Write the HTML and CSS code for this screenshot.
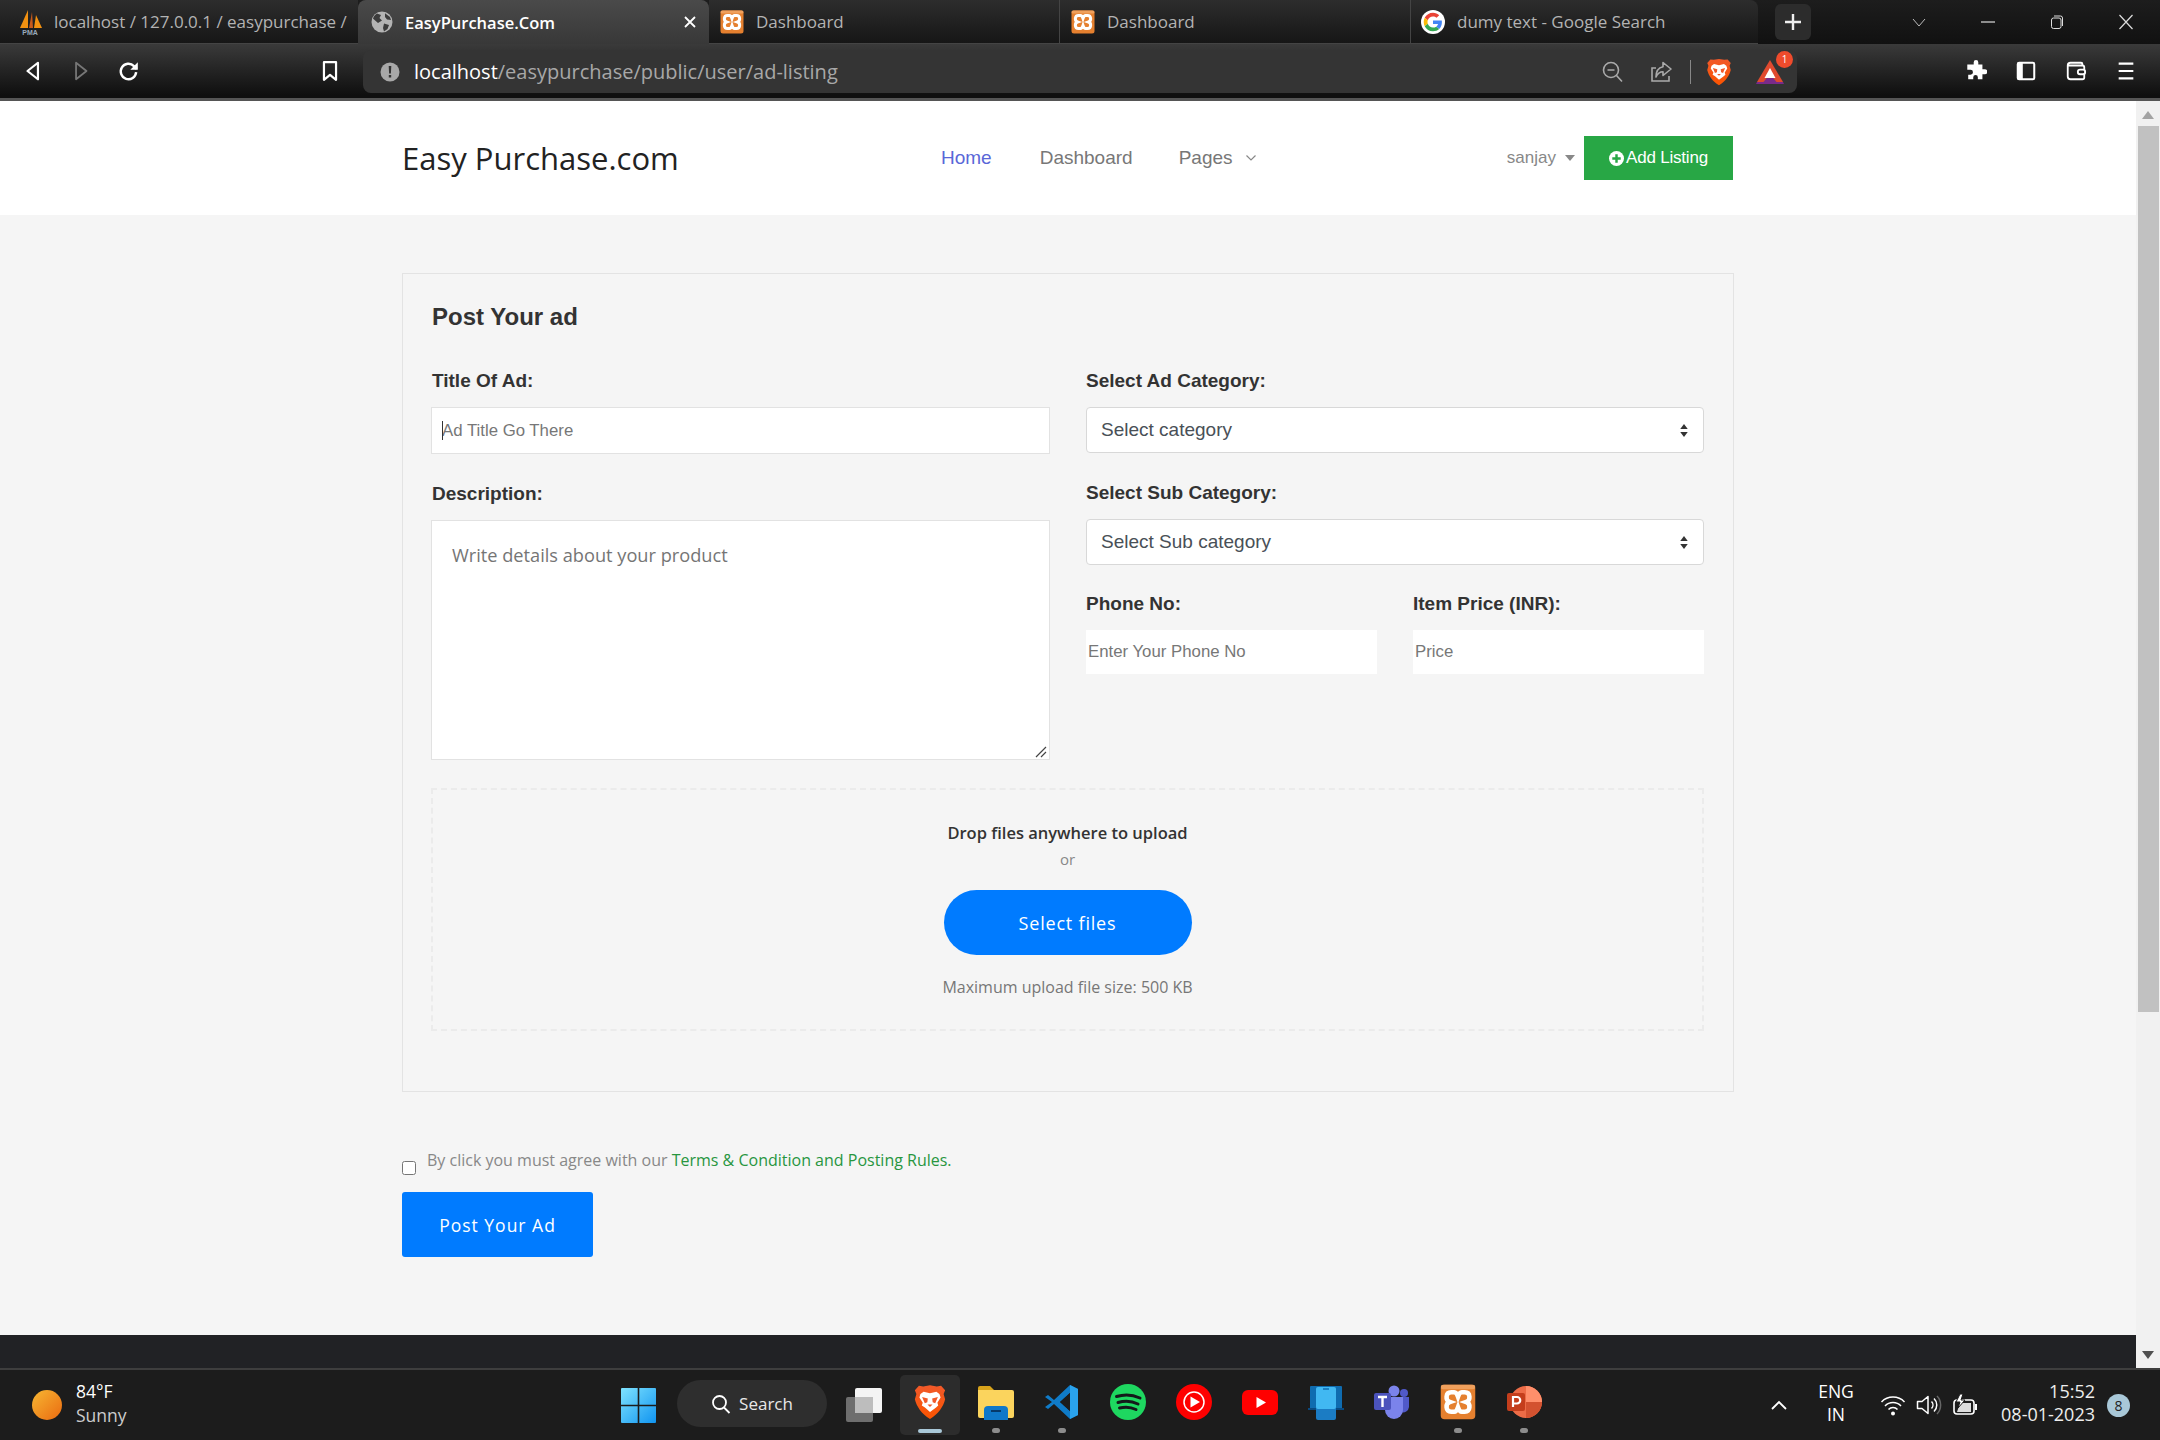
FILE: index.html
```html
<!DOCTYPE html>
<html lang="en">
<head>
<meta charset="utf-8">
<title>EasyPurchase.Com</title>
<link rel="stylesheet" href="styles.css">
</head>
<body>
<svg class="defs" width="0" height="0" aria-hidden="true">
  <defs>
    <linearGradient id="braveGrad" x1="0" y1="0" x2="0" y2="1"><stop offset="0" stop-color="#f1592a"/><stop offset="1" stop-color="#fb5400"/></linearGradient>
    <symbol id="brave" viewBox="0 0 24 24">
      <g transform="translate(12 0) scale(1.12 1) translate(-12 0)">
      <path fill="url(#braveGrad)" d="M12 .8 16 1.600l2.600-.4 2.400 3-.9 2.400.9 3.600C20 15 17 20 12 23.400 7 20 4 15 3 10.200l.9-3.600L3 4.200l2.400-3L8 1.600Z"/>
      <path fill="#fff" d="M8.200 5.200 12 6.200l3.800-1 1.800 1.500.7 2.300-1.900 3.500.5 1.900-1.300 1.300L12 18.600 9 15.700 7.100 14.400l.6-1.900L5.700 9l.6-2.300Z"/>
      <path fill="#f1592a" d="M7.300 8.600 10.700 9.600 10.400 12.200 8.900 12.800ZM16.700 8.600 13.300 9.600 13.600 12.200 15.100 12.800ZM10.500 13.700 13.500 13.700 12 15.300Z"/>
      </g>
    </symbol>
    <symbol id="xampp" viewBox="0 0 24 24">
      <rect x="0.500" y="0.500" width="23" height="23" rx="2.500" fill="#e5802f"/>
      <rect x="0.500" y="0.500" width="23" height="3" rx="1.500" fill="#f0a05c"/>
      <path fill="none" stroke="#fff" stroke-width="3" d="M9.500 5.500H7.500C3.500 5.500 3.500 11 6.500 12 3.500 13 3.500 18.500 7.500 18.500H9.500C11 18.500 11.500 17 12 15.500 12.500 17 13 18.500 14.500 18.500H16.500C20.500 18.500 20.500 13 17.500 12 20.500 11 20.500 5.500 16.500 5.500H14.500C13 5.500 12.500 7 12 8.500 11.500 7 11 5.500 9.500 5.500Z"/>
    </symbol>
  </defs>
</svg>

<div class="tabstrip">
  <div class="tab tab-first">
    <svg class="tabicon tabicon-pma" viewBox="0 0 26 26"><path fill="#f29111" d="M3 19 11 1v18Z"/><path fill="#c8591b" d="M12 19 15 3l1 16Z"/><path fill="#f29111" d="M17 19 19 6l6 13Z"/><text class="pma" x="13" y="25.500">PMA</text></svg>
    <span class="tablabel">localhost / 127.0.0.1 / easypurchase /</span>
  </div>
  <div class="tab tab-active">
    <svg class="tabicon" viewBox="0 0 24 24"><circle cx="12" cy="12" r="10.500" fill="#b4b4b4"/><path fill="#3c3c3c" d="M7 3.500 11 5 9.500 8 12 10.500 8 13 4 9.500 3 8.500C4 6 5 4.800 7 3.500ZM14 13.500l5 1.500-1.500 4-3.500 2.500-1-3.500ZM15 3.300 20 7l1 3-4-.5-2-2.500Z"/></svg>
    <span class="tablabel tablabel-active">EasyPurchase.Com</span>
    <svg class="tabclose" viewBox="0 0 14 14"><path d="M2 2 12 12M12 2 2 12" stroke="#fff" stroke-width="1.800" fill="none"/></svg>
  </div>
  <div class="tab tab-divided"><svg class="tabicon tabicon-sq"><use href="#xampp"/></svg><span class="tablabel">Dashboard</span></div>
  <div class="tab tab-divided"><svg class="tabicon tabicon-sq"><use href="#xampp"/></svg><span class="tablabel">Dashboard</span></div>
  <div class="tab tab-google">
    <svg class="tabicon" viewBox="-7 -7 62 62"><circle cx="24" cy="24" r="31" fill="#fff"/><path fill="#EA4335" d="M24 9.500c3.540 0 6.710 1.220 9.210 3.600l6.850-6.850C35.900 2.380 30.470 0 24 0 14.620 0 6.510 5.380 2.560 13.220l7.980 6.190C12.430 13.720 17.740 9.500 24 9.500z"/><path fill="#4285F4" d="M46.980 24.550c0-1.570-.15-3.090-.38-4.550H24v9.020h12.940c-.58 2.960-2.260 5.480-4.780 7.180l7.730 6c4.510-4.180 7.090-10.360 7.090-17.650z"/><path fill="#FBBC05" d="M10.530 28.590c-.48-1.450-.76-2.990-.76-4.590s.27-3.140.76-4.590l-7.980-6.190C.92 16.460 0 20.120 0 24c0 3.880.92 7.540 2.560 10.780l7.970-6.190z"/><path fill="#34A853" d="M24 48c6.480 0 11.930-2.130 15.890-5.810l-7.730-6c-2.150 1.450-4.920 2.300-8.160 2.300-6.260 0-11.570-4.220-13.470-9.910l-7.980 6.190C6.510 42.620 14.620 48 24 48z"/></svg>
    <span class="tablabel">dumy text - Google Search</span>
  </div>
  <div class="newtab"><svg viewBox="0 0 20 20" class="plus"><path d="M10 2v16M2 10h16" stroke="#eee" stroke-width="2.400"/></svg></div>
  <div class="winctl">
    <svg class="winbtn" viewBox="0 0 16 16"><path d="M2 5l6 7 6-7" stroke="#bbb" fill="none"/></svg>
    <svg class="winbtn" viewBox="0 0 16 16"><path d="M1 8h14" stroke="#ddd" stroke-width="1.200"/></svg>
    <svg class="winbtn" viewBox="0 0 16 16"><rect x="2.500" y="4" width="9.500" height="10.500" rx="2" stroke="#ddd" fill="none"/><path d="M5 2h6.500a2 2 0 0 1 2 2v8" stroke="#ddd" fill="none"/></svg>
    <svg class="winbtn" viewBox="0 0 16 16"><path d="M1.500 1 14.500 15M14.500 1 1.500 15" stroke="#ddd" stroke-width="1.200"/></svg>
  </div>
</div>

<div class="toolbar">
  <div class="navbtns">
    <svg class="navicon" viewBox="0 0 20 20"><path d="M14.500 2.500 5 10l9.500 7.500Z" fill="none" stroke="#fff" stroke-width="2" stroke-linejoin="round"/></svg>
    <svg class="navicon" viewBox="0 0 20 20"><path d="M5.500 2.500 15 10l-9.500 7.500Z" fill="none" stroke="#777" stroke-width="1.600" stroke-linejoin="round"/></svg>
    <svg class="navicon" viewBox="0 0 20 20"><path d="M16.500 11a7 7 0 1 1-2-5.500L17 8" fill="none" stroke="#fff" stroke-width="2.200"/><path d="M18 2v6.800h-6.800Z" fill="#fff"/></svg>
    <svg class="navicon navicon-book" viewBox="0 0 20 20"><path d="M4.500 2h11v16L10 13.500 4.500 18Z" fill="none" stroke="#fff" stroke-width="2" stroke-linejoin="round"/></svg>
  </div>
  <div class="addressbar">
    <svg class="infoicon" viewBox="0 0 20 20"><circle cx="10" cy="10" r="9.500" fill="#a8a8a8"/><path d="M8.700 4h2.600l-.4 7.500H9.100ZM8.800 13h2.400v2.400H8.800Z" fill="#333"/></svg>
    <span class="url"><span class="url-host">localhost</span>/easypurchase/public/user/ad-listing</span>
    <div class="addr-actions">
      <svg class="acticon" viewBox="0 0 24 24"><circle cx="10" cy="10" r="7.500" fill="none" stroke="#aaa" stroke-width="1.600"/><path d="M6.500 10h7M15.500 15.500 21 21.500" stroke="#aaa" stroke-width="1.600"/></svg>
      <svg class="acticon acticon-share" viewBox="0 0 24 24"><path d="M7 8H3v13h17v-5" fill="none" stroke="#aaa" stroke-width="1.600"/><path d="M14 2.500 22 9l-8 6.500v-3.700C10.500 11.800 8.500 13.500 7 17c0-6 3-9.500 7-10.300Z" fill="none" stroke="#aaa" stroke-width="1.600" stroke-linejoin="round"/></svg>
      <span class="addr-sep"></span>
      <svg class="braveicon"><use href="#brave"/></svg>
      <span class="bat">
        <svg class="baticon" viewBox="0 0 30 30"><path d="M15 3 28 25H2Z" fill="#e04a2f"/><path d="M2 25 8.500 25 15 17 21.500 25H28L29 27H1Z" fill="#7a2a8a"/><path d="M15 11 20.500 21H9.500Z" fill="#fff"/></svg>
        <span class="batbadge">1</span>
      </span>
    </div>
  </div>
  <div class="extensions">
    <svg class="exticon" viewBox="0 0 24 24"><path fill="#fff" d="M9.500 2.500a2.500 2.500 0 0 1 5 0V5H19v5h2.500a2.800 2.800 0 0 1 0 5.600H19V21h-5v-2.200a2.500 2.500 0 0 0-5 0V21H3.500v-5H6a2.700 2.700 0 0 0 0-5.400H2.500V5h7Z"/></svg>
    <svg class="exticon" viewBox="0 0 24 24"><rect x="3" y="3" width="18" height="18" rx="1.500" fill="none" stroke="#fff" stroke-width="2.200"/><rect x="3" y="3" width="5.500" height="18" fill="#fff"/></svg>
    <svg class="exticon" viewBox="0 0 24 24"><path d="M19 6V4.500A1.500 1.500 0 0 0 17.500 3H6a3 3 0 0 0-3 3v12a3 3 0 0 0 3 3h13a2 2 0 0 0 2-2V8a2 2 0 0 0-2-2H3.500" fill="none" stroke="#fff" stroke-width="2"/><rect x="14" y="10.500" width="8" height="5" rx="2.500" fill="#222" stroke="#fff" stroke-width="2"/></svg>
    <svg class="exticon" viewBox="0 0 24 24"><path d="M4 4h16M4 12h16M4 20h16" stroke="#fff" stroke-width="2.400"/></svg>
  </div>
</div>

<div class="viewport">
  <div class="page">
    <header class="site-header">
      <div class="container header-inner">
        <a class="logo">Easy Purchase.com</a>
        <nav class="mainnav">
          <a class="navlink navlink-active">Home</a>
          <a class="navlink">Dashboard</a>
          <a class="navlink navlink-pages">Pages <svg class="chev" viewBox="0 0 12 8"><path d="M1.500 1.500 6 6l4.500-4.500" fill="none" stroke="#888" stroke-width="1.200"/></svg></a>
        </nav>
        <div class="useractions">
          <span class="username">sanjay <span class="caret"></span></span>
          <a class="addbtn"><svg class="plusicon" viewBox="0 0 16 16"><circle cx="8" cy="8" r="8" fill="#fff"/><path d="M8 3.500v9M3.500 8h9" stroke="#28a745" stroke-width="2.600"/></svg>Add Listing</a>
        </div>
      </div>
    </header>

    <main class="main">
      <div class="container">
        <section class="card">
          <h2 class="card-title">Post Your ad</h2>
          <div class="formgrid">
            <div class="col">
              <label class="label">Title Of Ad:</label>
              <div class="inputwrap">
                <span class="textcaret"></span>
                <input class="input" type="text" placeholder="Ad Title Go There">
              </div>
              <label class="label label-desc">Description:</label>
              <div class="textareawrap">
                <textarea class="textarea" placeholder="Write details about your product"></textarea>
                <svg class="grip" viewBox="0 0 12 12"><path d="M1 11 11 1M6 11 11 6" stroke="#444" stroke-width="1.200"/></svg>
              </div>
            </div>
            <div class="col">
              <label class="label">Select Ad Category:</label>
              <div class="selectbox"><span>Select category</span><svg class="updown" viewBox="0 0 10 16"><path d="M5 1 9 6.500H1ZM5 15 1 9.500h8Z" fill="#333"/></svg></div>
              <label class="label label-sub">Select Sub Category:</label>
              <div class="selectbox"><span>Select Sub category</span><svg class="updown" viewBox="0 0 10 16"><path d="M5 1 9 6.500H1ZM5 15 1 9.500h8Z" fill="#333"/></svg></div>
              <div class="pair">
                <div>
                  <label class="label">Phone No:</label>
                  <input class="input input-plain" type="text" placeholder="Enter Your Phone No">
                </div>
                <div>
                  <label class="label">Item Price (INR):</label>
                  <input class="input input-plain" type="text" placeholder="Price">
                </div>
              </div>
            </div>
          </div>
          <div class="dropzone">
            <p class="drop-title">Drop files anywhere to upload</p>
            <p class="drop-or">or</p>
            <a class="selectfiles">Select files</a>
            <p class="drop-max">Maximum upload file size: 500 KB</p>
          </div>
        </section>
        <div class="terms">
          <input class="check" type="checkbox">
          <span class="terms-text">By click you must agree with our <a class="terms-link">Terms &amp; Condition and Posting Rules.</a></span>
        </div>
        <a class="postbtn">Post Your Ad</a>
      </div>
    </main>
    <footer class="site-footer"></footer>
  </div>
  <div class="scrollbar">
    <svg class="sb-arrow" viewBox="0 0 12 8"><path d="M6 0 12 8H0Z" fill="#a3a3a3"/></svg>
    <div class="sb-thumb"></div>
    <svg class="sb-arrow sb-arrow-down" viewBox="0 0 12 8"><path d="M6 8 0 0h12Z" fill="#505050"/></svg>
  </div>
</div>

<div class="taskbar">
  <div class="weather">
    <span class="sun"></span>
    <div class="weather-text"><span class="temp">84°F</span><span class="cond">Sunny</span></div>
  </div>
  <svg class="winlogo" viewBox="0 0 35 35"><defs><linearGradient id="winGrad" x1="0" y1="0" x2="1" y2="1"><stop offset="0" stop-color="#7fe3ff"/><stop offset="1" stop-color="#1094f0"/></linearGradient></defs><path fill="url(#winGrad)" d="M1 0h15.700v16.700H0V1a1 1 0 0 1 1-1ZM18.300 0H34a1 1 0 0 1 1 1v15.700H18.300ZM0 18.300h16.700V35H1a1 1 0 0 1-1-1ZM18.300 18.300H35V34a1 1 0 0 1-1 1H18.300Z"/></svg>
  <div class="searchpill">
    <svg class="searchicon" viewBox="0 0 20 20"><circle cx="8.500" cy="8.500" r="6.500" fill="none" stroke="#fff" stroke-width="1.800"/><path d="M13 13.500 18.500 19" stroke="#fff" stroke-width="1.800"/></svg>
    <span>Search</span>
  </div>
  <svg class="taskview" viewBox="0 0 36 34"><rect x="0" y="9" width="27" height="25" rx="2" fill="#6e6e6e"/><rect x="9" y="0" width="27" height="25" rx="2" fill="#f4f4f4"/><rect x="9" y="9" width="18" height="16" fill="#bdbdbd"/></svg>
  <div class="apps">
    <div class="app app-current"><svg class="appicon appicon-brave"><use href="#brave"/></svg><span class="runbar"></span></div>
    <div class="app"><svg class="appicon" viewBox="0 0 36 36"><path d="M0 4a2 2 0 0 1 2-2h10l4 4H0Z" fill="#d8a31b"/><path d="M0 6h34a2 2 0 0 1 2 2v24a2 2 0 0 1-2 2H2a2 2 0 0 1-2-2Z" fill="#fbd45d"/><path d="M6 36V26a4 4 0 0 1 4-4h16a4 4 0 0 1 4 4v10Z" fill="#0f78c9"/><path d="M13 27h10" stroke="#063a6b" stroke-width="2"/></svg><span class="rundot"></span></div>
    <div class="app"><svg class="appicon" viewBox="0 0 36 36"><path d="M26 1 34 5v26l-8 4L10 20l-6 5-3-2 7-5-7-5 3-2 6 5Z" fill="#0f7bc8"/><path d="M26 9v18l-10-9Z" fill="#1c1c1c"/><path d="M26 1 34 5v26l-8 4Z" fill="#2aa3ee"/><path d="M26 9v18l-10-9Z" fill="#1c1c1c"/></svg><span class="rundot"></span></div>
    <div class="app"><svg class="appicon" viewBox="0 0 36 36"><circle cx="18" cy="18" r="18" fill="#1ed760"/><path d="M6.500 12.500c8-2.500 16-2 23.500 1.500M8 18.500c7-2 14-1.500 20 1.500M9.500 24c6-1.500 11.500-1 16.500 1.500" fill="none" stroke="#14191a" stroke-width="3" stroke-linecap="round"/></svg></div>
    <div class="app"><svg class="appicon" viewBox="0 0 36 36"><circle cx="18" cy="18" r="18" fill="#f00"/><circle cx="18" cy="18" r="10" fill="none" stroke="#fff" stroke-width="1.500"/><path d="M14.500 12.500 24 18l-9.500 5.500Z" fill="#fff"/></svg></div>
    <div class="app"><svg class="appicon" viewBox="0 0 36 36"><rect x="0" y="6" width="36" height="25" rx="6" fill="#f00"/><path d="M14.500 13 24 18.500 14.500 24Z" fill="#fff"/></svg></div>
    <div class="app"><svg class="appicon" viewBox="0 0 36 36"><path d="M3 2h30a1 1 0 0 1 1 1v23H2V3a1 1 0 0 1 1-1Z" fill="#0f6cb0"/><path d="M0 24h36v2H0Z" fill="#0a4a80"/><rect x="8" y="3" width="20" height="33" rx="2" fill="#1b7cc4"/><rect x="8" y="3" width="20" height="22" rx="2" fill="#41b8f2"/><path d="M15 5h6" stroke="#0f6cb0" stroke-width="1.500"/></svg></div>
    <div class="app"><svg class="appicon" viewBox="0 0 36 36"><circle cx="20" cy="7" r="5.500" fill="#7b83eb"/><circle cx="30" cy="9" r="4" fill="#5059c9"/><path d="M24 13h11v10a6 6 0 0 1-8 5Z" fill="#5059c9"/><path d="M11 13h18v13a9 9 0 0 1-18 0Z" fill="#7b83eb"/><rect x="0" y="9" width="17" height="17" rx="2" fill="#4b53bc"/><path d="M4 13h9M8.500 13v10" stroke="#fff" stroke-width="2.400"/></svg></div>
    <div class="app"><svg class="appicon"><use href="#xampp"/></svg><span class="rundot"></span></div>
    <div class="app"><svg class="appicon" viewBox="0 0 36 36"><circle cx="20" cy="18" r="16" fill="#ed6c47"/><path d="M20 2a16 16 0 0 1 16 16H20Z" fill="#ff8f6b"/><path d="M20 18h16a16 16 0 0 1-16 16Z" fill="#d35230"/><rect x="1" y="9" width="18" height="18" rx="2" fill="#c43e1c"/><path d="M7 23V13h4a3 3 0 0 1 0 6.500H7" fill="none" stroke="#fff" stroke-width="2.200"/></svg><span class="rundot"></span></div>
  </div>
  <div class="tray">
    <svg class="trayup" viewBox="0 0 18 12"><path d="M2 10 9 3l7 7" fill="none" stroke="#fff" stroke-width="1.800"/></svg>
    <div class="lang"><span>ENG</span><span>IN</span></div>
    <svg class="trayicon" viewBox="0 0 26 22"><path d="M1.500 8a16 16 0 0 1 23 0M5 12a11 11 0 0 1 16 0M8.500 15.500a6 6 0 0 1 9 0" fill="none" stroke="#fff" stroke-width="1.500"/><circle cx="13" cy="19.500" r="2" fill="#fff"/></svg>
    <svg class="trayicon" viewBox="0 0 26 22"><path d="M1.500 7.500h4.500L12 2.500v17L6 14.500H1.500Z" fill="none" stroke="#fff" stroke-width="1.500" stroke-linejoin="round"/><path d="M15.500 7.500a5 5 0 0 1 0 7M18 4.500a9 9 0 0 1 0 13" fill="none" stroke="#fff" stroke-width="1.500"/><path d="M21 2a13 13 0 0 1 0 18" fill="none" stroke="#666" stroke-width="1.500"/></svg>
    <svg class="trayicon" viewBox="0 0 26 22"><rect x="2" y="6" width="20" height="14" rx="3" fill="none" stroke="#fff" stroke-width="1.600"/><path d="M24 10v6" stroke="#fff" stroke-width="2"/><path d="M5 18l3-9h11v9Z" fill="#ddd"/><path d="M8 0 4 8h4l-2 6 7-8H9l2-6Z" fill="#fff" stroke="#1c1c1c"/></svg>
    <div class="clock"><span>15:52</span><span>08-01-2023</span></div>
    <span class="notify">8</span>
  </div>
</div>
</body>
</html>
```

FILE: styles.css
```css
* { box-sizing: border-box; }
html, body { margin: 0; padding: 0; }
body {
  width: 2160px;
  height: 1440px;
  overflow: hidden;
  display: flex;
  flex-direction: column;
  font-family: "Liberation Sans", Arial, sans-serif;
  background: #f5f5f5;
}
.defs { position: absolute; }
a { text-decoration: none; color: inherit; }
p, h2 { margin: 0; }

/* Browser tab strip */
.tabstrip {
  height: 44px;
  flex: none;
  display: flex;
  align-items: stretch;
  background: linear-gradient(#1d1d1d, #111);
  font-family: "Open Sans", sans-serif;
  font-size: 17px;
}
.tab {
  width: 351px;
  display: flex;
  align-items: center;
  padding-left: 18px;
  gap: 12px;
  background: linear-gradient(#2d2d2d, #161616);
  border-bottom: 1px solid #444;
  overflow: hidden;
  white-space: nowrap;
}
.tab-first { width: 358px; padding-left: 17px; gap: 11px; }
.tab-active {
  background: linear-gradient(#4a4a4a, #383838);
  border-radius: 8px 8px 0 0;
  border-bottom: 0;
  padding-left: 12px;
  padding-right: 10px;
  gap: 11px;
}
.tab-divided { border-right: 1px solid #444; padding-left: 11px; }
.tab-google { padding-left: 10px; width: 347px; border-radius: 0 8px 0 0; }
.tabicon { width: 24px; height: 24px; flex: none; }
.tabicon-pma { width: 26px; height: 26px; }
.tabicon-sq { width: 24px; height: 24px; }
.pma { font: bold 7px "Liberation Sans", sans-serif; fill: #9ab; text-anchor: middle; }
.tablabel { color: #b3b3b3; }
.tablabel-active { color: #fff; font-weight: 600; flex: 1; font-size: 16.500px; }
.tabclose { width: 14px; height: 14px; margin-right: 2px; flex: none; }
.newtab {
  width: 36px;
  height: 36px;
  margin: 4px 0 0 17px;
  background: #2c2c2c;
  border-radius: 6px;
  display: flex;
  align-items: center;
  justify-content: center;
}
.plus { width: 20px; height: 20px; }
.winctl { display: flex; margin-left: 100px; gap: 53px; align-items: center; }
.winbtn { width: 16px; height: 16px; }

/* Browser toolbar */
.toolbar {
  height: 57px;
  flex: none;
  display: flex;
  align-items: flex-start;
  background: linear-gradient(#3a3a3a, #0f0f0f 95%);
  border-bottom: 3px solid #555;
}
.navbtns { width: 363px; height: 54px; display: flex; align-items: center; padding-left: 22px; }
.navicon { width: 22px; height: 22px; margin-right: 26px; }
.navicon-book { margin-left: 153px; margin-right: 0; }
.addressbar {
  width: 1434px;
  height: 43px;
  margin-top: 6px;
  background: #343434;
  border-radius: 8px;
  display: flex;
  align-items: center;
  padding-left: 17px;
}
.infoicon { width: 20px; height: 20px; flex: none; }
.url {
  margin-left: 14px;
  font-family: "Open Sans", sans-serif;
  font-size: 20px;
  color: #a8a8a8;
  white-space: nowrap;
}
.url-host { color: #fff; }
.addr-actions { margin-left: auto; display: flex; align-items: center; padding-right: 12px; }
.acticon { width: 24px; height: 24px; margin-right: 24px; }
.acticon-share { margin-right: 17px; }
.addr-sep { width: 1px; height: 24px; background: #888; margin-right: 14px; }
.braveicon { width: 28px; height: 28px; margin-right: 22px; }
.bat { position: relative; display: block; width: 30px; height: 30px; }
.baticon { width: 30px; height: 30px; display: block; }
.batbadge {
  position: absolute;
  top: -6px;
  right: -8px;
  width: 17px;
  height: 17px;
  border-radius: 50%;
  background: #ef4b2c;
  color: #fff;
  font: 10px/17px "Open Sans", sans-serif;
  text-align: center;
}
.extensions { flex: 1; height: 54px; display: flex; align-items: center; padding-left: 168px; gap: 28px; }
.exticon { width: 22px; height: 22px; }

/* Page */
.viewport { flex: 1; display: flex; min-height: 0; }
.page { flex: 1; display: flex; flex-direction: column; min-width: 0; }
.container { width: 1332px; margin: 0 auto; }
.site-header { height: 114px; background: #fff; flex: none; }
.header-inner { display: flex; align-items: flex-start; height: 100%; }
.logo {
  font-family: "Open Sans", sans-serif;
  font-size: 31px;
  line-height: 44px;
  color: #222;
  margin-top: 35px;
  width: 539px;
}
.mainnav { display: flex; gap: 48px; font-size: 19px; color: #777; margin-top: 46px; line-height: 22px; }
.navlink-active { color: #5a67d8; }
.navlink-pages { display: flex; align-items: center; gap: 12px; margin-left: -2px; }
.chev { width: 12px; height: 8px; }
.useractions { margin-left: auto; margin-right: 1px; display: flex; align-items: flex-start; gap: 9px; margin-top: 35px; }
.username { font-size: 17px; color: #888; line-height: 44px; display: flex; align-items: center; gap: 9px; }
.caret { width: 0; height: 0; border: 5px solid transparent; border-top: 6px solid #888; border-bottom: 0; }
.addbtn {
  width: 149px;
  height: 44px;
  background: #28a745;
  color: #fff;
  font-size: 17px;
  display: flex;
  align-items: center;
  justify-content: center;
  gap: 2px;
  letter-spacing: -.2px;
}
.plusicon { width: 15px; height: 15px; }

.main { flex: 1; padding-top: 58px; background: #f5f5f5; }
.card {
  height: 819px;
  border: 1px solid #e3e3e3;
  padding: 26px 29px 0 28px;
}
.card-title { font-size: 24px; line-height: 34px; color: #333; font-weight: bold; margin-left: 1px; }
.formgrid { display: grid; grid-template-columns: 619px 618px; gap: 36px; margin-top: 35px; }
.col { min-width: 0; }
.label { display: block; font-size: 19px; font-weight: bold; line-height: 24px; color: #333; margin-bottom: 14px; margin-left: 1px; }
.col:last-child .label { margin-left: 0; }
.label-desc { margin-top: 28px; }
.label-sub { margin-top: 28px; }
.inputwrap { position: relative; }
.textcaret { position: absolute; left: 11px; top: 14px; width: 1px; height: 19px; background: #333; }
.input {
  display: block;
  width: 100%;
  height: 47px;
  border: 1px solid #e2e2e2;
  background: #fff;
  font: 16.800px "Liberation Sans", sans-serif;
  padding: 0 10px;
  outline: 0;
}
.input::placeholder { color: #777; opacity: 1; }
.input-plain { height: 44px; border: 0; padding: 0 2px; }
.textareawrap { position: relative; }
.textarea {
  display: block;
  width: 100%;
  height: 240px;
  border: 1px solid #e2e2e2;
  background: #fff;
  padding: 23px 20px;
  font: 18.200px/1.3 "Open Sans", sans-serif;
  outline: 0;
  resize: none;
}
.textarea::placeholder { color: #757575; opacity: 1; }
.grip { position: absolute; right: 3px; bottom: 2px; width: 12px; height: 12px; }
.selectbox {
  height: 46px;
  border: 1px solid #d8d8d8;
  border-radius: 4px;
  background: #fff;
  display: flex;
  align-items: center;
  justify-content: space-between;
  padding: 0 14px 0 14px;
  font-size: 19px;
  color: #495057;
}
.updown { width: 10px; height: 15px; }
.pair { display: grid; grid-template-columns: 291px 291px; gap: 36px; margin-top: 27px; }
.pair .label { margin-bottom: 14px; }

.dropzone {
  margin-top: 28px;
  height: 243px;
  border: 2px dashed #ebebeb;
  font-family: "Open Sans", sans-serif;
  display: flex;
  flex-direction: column;
  align-items: center;
  padding-top: 30px;
}
.drop-title { font-size: 16.500px; line-height: 26px; font-weight: 600; color: #333; }
.drop-or { font-size: 15px; line-height: 26px; color: #888; }
.selectfiles {
  margin-top: 18px;
  width: 248px;
  height: 65px;
  border-radius: 33px;
  background: #007bff;
  color: #fff;
  font-size: 18px;
  letter-spacing: .8px;
  display: flex;
  align-items: center;
  justify-content: center;
}
.drop-max { margin-top: 20px; font-size: 16px; line-height: 24px; color: #777; }

.terms { display: flex; align-items: flex-start; margin-top: 56px; font-family: "Open Sans", sans-serif; font-size: 16px; line-height: 24px; color: #888; }
.check { width: 14px; height: 14px; margin: 13px 11px 0 0; flex: none; }
.terms-link { color: #28963f; }
.postbtn {
  display: flex;
  align-items: center;
  justify-content: center;
  width: 191px;
  height: 65px;
  margin-top: 17px;
  background: #007bff;
  border-radius: 3px;
  color: #fff;
  font-family: "Open Sans", sans-serif;
  font-size: 17.500px;
  letter-spacing: 1px;
}
.site-footer { height: 33px; flex: none; background: #212225; }

/* Scrollbar */
.scrollbar { width: 24px; flex: none; background: #f1f1f1; display: flex; flex-direction: column; align-items: center; padding: 8px 0; }
.sb-arrow { width: 12px; height: 8px; flex: none; margin-top: 2px; }
.sb-thumb { width: 21px; height: 886px; background: #c1c1c1; margin-top: 7px; }
.sb-arrow-down { margin-top: auto; margin-bottom: 1px; }

/* Taskbar */
.taskbar {
  height: 72px;
  flex: none;
  background: #1c1c1c;
  border-top: 2px solid #3e3e3e;
  display: flex;
  align-items: center;
  color: #fff;
  font-family: "Open Sans", sans-serif;
}
.weather { width: 621px; display: flex; align-items: center; padding-left: 32px; gap: 14px; }
.sun { width: 30px; height: 30px; border-radius: 50%; background: linear-gradient(135deg, #f7b733, #ea6a10); }
.weather-text { display: flex; flex-direction: column; font-size: 17.500px; line-height: 24px; margin-bottom: 4px; }
.cond { color: #ccc; }
.winlogo { width: 35px; height: 35px; flex: none; }
.searchpill {
  width: 150px;
  height: 47px;
  margin-left: 21px;
  margin-bottom: 3px;
  border-radius: 24px;
  background: #2e2e2e;
  display: flex;
  align-items: center;
  justify-content: center;
  gap: 8px;
  font-size: 17px;
  color: #e8e8e8;
}
.searchicon { width: 20px; height: 20px; }
.taskview { width: 36px; height: 34px; margin-left: 19px; flex: none; }
.apps { display: flex; margin-left: 15px; }
.app { width: 66px; height: 60px; position: relative; display: flex; align-items: center; justify-content: center; padding-bottom: 6px; }
.appicon { width: 36px; height: 36px; }
.app-current::before {
  content: "";
  position: absolute;
  left: 3px;
  right: 3px;
  top: 0;
  bottom: 0;
  background: #2c2c2c;
  border-radius: 5px;
  z-index: 0;
}
.app-current .appicon { position: relative; z-index: 1; }
.runbar { position: absolute; left: 21px; bottom: 2px; width: 24px; height: 4px; border-radius: 2px; background: #a9c8d8; z-index: 1; }
.rundot { position: absolute; left: 29px; bottom: 2px; width: 8px; height: 5px; border-radius: 3px; background: #8c8c8c; }
.tray { display: flex; align-items: center; flex: 1; padding-left: 213px; }
.trayup { width: 18px; height: 12px; margin-right: 28px; }
.lang { display: flex; flex-direction: column; align-items: center; width: 40px; font-size: 17.500px; line-height: 23px; margin-bottom: 4px; }
.trayicon { width: 26px; height: 22px; margin-left: 10px; }
.lang + .trayicon { margin-left: 24px; }
.clock { display: flex; flex-direction: column; align-items: flex-end; width: 117px; font-size: 18px; line-height: 23px; color: #eee; margin-bottom: 4px; }
.notify { width: 23px; height: 23px; border-radius: 50%; background: #a9c8d8; color: #222; font-size: 14px; line-height: 23px; text-align: center; margin-left: 12px; }
```
